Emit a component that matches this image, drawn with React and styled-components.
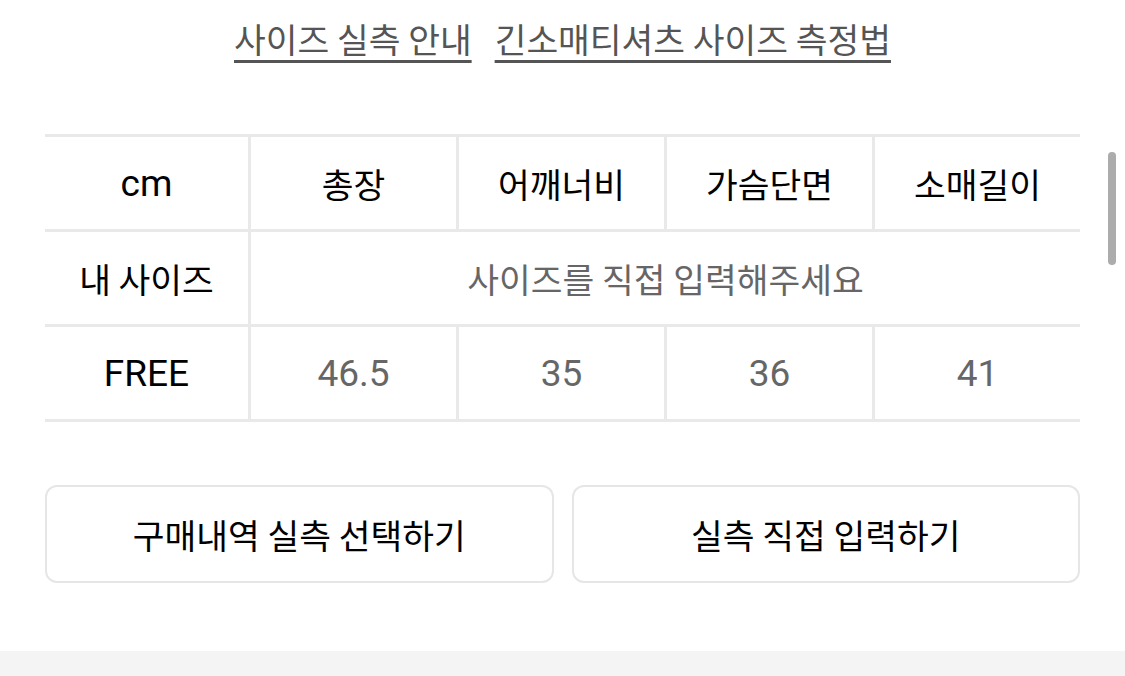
import React from "react";
import styled, { createGlobalStyle } from "styled-components";

const GlobalStyle = createGlobalStyle`
  html, body {
    margin: 0;
    padding: 0;
    background: #ffffff;
  }
  body {
    font-family: "Noto Sans CJK KR", sans-serif;
    color: #111;
    overflow: hidden;
  }
`;

const Page = styled.div`
  position: relative;
  width: 1125px;
  height: 676px;
  display: flex;
  flex-direction: column;
`;

const Content = styled.div`
  flex: 1;
  padding: 0 45px;
  display: flex;
  flex-direction: column;
`;

const LinkRow = styled.div`
  display: flex;
  justify-content: center;
  gap: 23px;
  padding-top: 12px;
  height: 134px;
  box-sizing: border-box;
`;

const GuideLink = styled.a`
  font-family: "Noto Sans CJK KR", sans-serif;
  font-size: 34.5px;
  line-height: 52px;
  height: 52px;
  color: #555;
  text-decoration: underline;
  text-decoration-thickness: 3px;
  text-underline-offset: 7px;
  cursor: pointer;
`;

const Table = styled.div`
  display: grid;
  grid-template-columns: 203px repeat(4, 1fr);
  gap: 3px;
  padding: 3px 0;
  background: #e9e9e9;
`;

const Cell = styled.div`
  background: #fff;
  height: 92px;
  display: flex;
  align-items: center;
  justify-content: center;
  font-family: ${(p) =>
    p.$latin ? '"Roboto", "Liberation Sans", sans-serif' : '"Noto Sans CJK KR", sans-serif'};
  font-size: ${(p) => (p.$latin ? "37px" : "34.5px")};
  font-weight: 400;
  color: ${(p) => (p.$muted ? "#666" : "#000")};
  grid-column: ${(p) => (p.$span ? `span ${p.$span}` : "auto")};
  box-sizing: border-box;
`;

const ButtonRow = styled.div`
  display: grid;
  grid-template-columns: 1fr 1fr;
  gap: 18px;
  margin-top: 63px;
`;

const ActionButton = styled.button`
  height: 98px;
  background: #fff;
  border: 2px solid #e6e6e6;
  border-radius: 12px;
  font-family: "Noto Sans CJK KR", sans-serif;
  font-size: 34.5px;
  font-weight: 400;
  color: #000;
  cursor: pointer;
`;

const BottomBand = styled.div`
  height: 25px;
  background: #f4f4f4;
`;

const ScrollThumb = styled.div`
  position: absolute;
  left: 1108px;
  top: 152px;
  width: 8px;
  height: 113px;
  border-radius: 4px;
  background: #acacac;
`;

const headers = ["총장", "어깨너비", "가슴단면", "소매길이"];
const free = ["46.5", "35", "36", "41"];

export default function App() {
  return (
    <Page>
      <GlobalStyle />
      <Content>
        <LinkRow>
          <GuideLink>사이즈 실측 안내</GuideLink>
          <GuideLink>긴소매티셔츠 사이즈 측정법</GuideLink>
        </LinkRow>
        <Table>
          <Cell $latin>cm</Cell>
          {headers.map((h) => (
            <Cell key={h}>{h}</Cell>
          ))}
          <Cell>내 사이즈</Cell>
          <Cell $span={4} $muted>
            사이즈를 직접 입력해주세요
          </Cell>
          <Cell $latin>FREE</Cell>
          {free.map((v, i) => (
            <Cell key={i} $latin $muted>
              {v}
            </Cell>
          ))}
        </Table>
        <ButtonRow>
          <ActionButton>구매내역 실측 선택하기</ActionButton>
          <ActionButton>실측 직접 입력하기</ActionButton>
        </ButtonRow>
      </Content>
      <BottomBand />
      <ScrollThumb />
    </Page>
  );
}
